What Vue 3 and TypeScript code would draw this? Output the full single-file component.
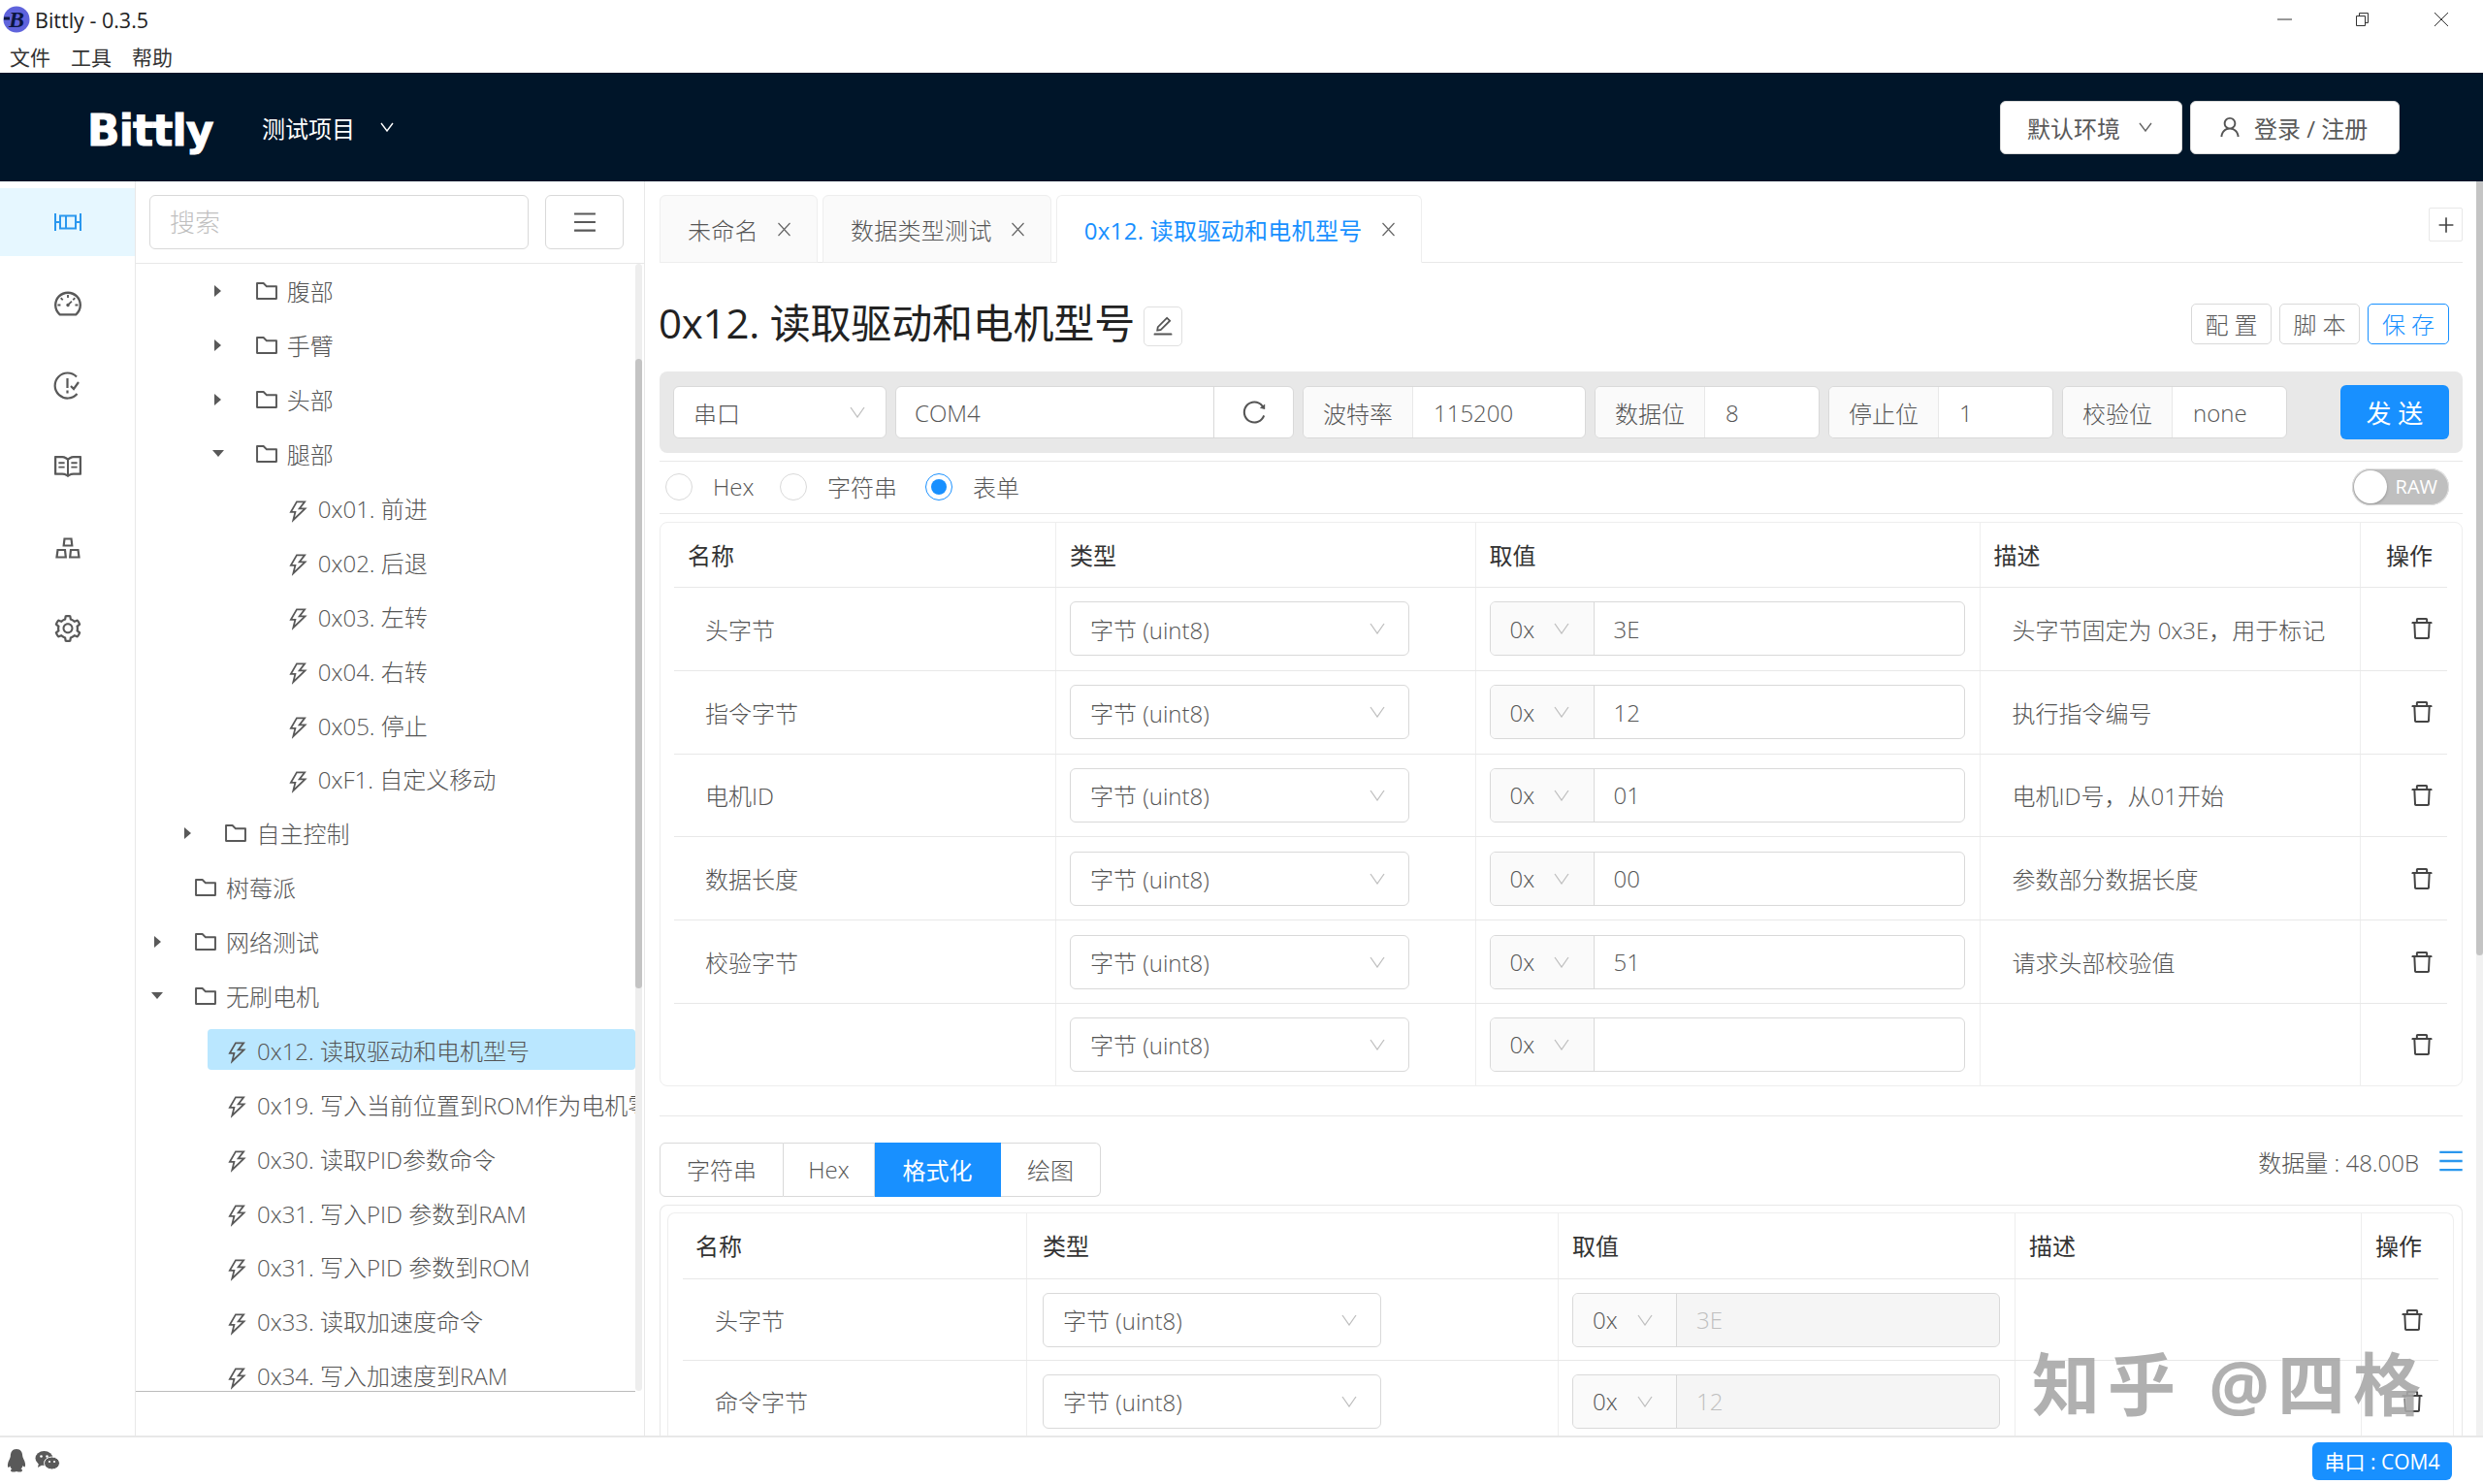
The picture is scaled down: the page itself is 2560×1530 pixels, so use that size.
<script setup lang="ts">
const ICONS: Record<string, string> = {
  delete: 'M360 184h-8c4.4 0 8-3.6 8-8v8h304v-8c0 4.4 3.6 8 8 8h-8v72h72v-80c0-35.3-28.7-64-64-64H352c-35.3 0-64 28.7-64 64v80h72v-72zm504 72H160c-17.7 0-32 14.3-32 32v32c0 4.4 3.6 8 8 8h60.4l24.7 523c1.6 34.1 29.8 61 63.9 61h454c34.2 0 62.3-26.8 63.9-61l24.7-523H888c4.4 0 8-3.6 8-8v-32c0-17.7-14.3-32-32-32zM731.3 840H292.7l-24.2-512h487l-24.2 512z',
  folder: 'M880 298.4H521L403.7 186.2a8.15 8.15 0 0 0-5.5-2.2H144c-17.7 0-32 14.3-32 32v592c0 17.7 14.3 32 32 32h736c17.7 0 32-14.3 32-32V330.4c0-17.7-14.3-32-32-32zM840 768H184V256h188.5l119.6 114.4H840V768z',
  bolt: 'M848 359.3H627.7L825.8 109c4.1-5.3.4-13-6.3-13H436c-2.8 0-5.5 1.5-6.9 4L170 547.5c-3.1 5.3.7 12 6.9 12h174.4l-89.4 357.6c-1.9 7.8 7.5 13.3 13.3 7.7L853.5 373c5.2-4.9 1.7-13.7-5.5-13.7zM378.2 732.5l60.3-241H281.1l189.6-327.4h224.6L487 427.4h211L378.2 732.5z',
  reload: 'M909.1 209.3l-56.4 44.1C775.8 155.1 656.2 92 521.9 92 290 92 102.3 279.5 102 511.5 101.7 743.7 289.8 932 521.9 932c181.3 0 335.8-115 394.6-276.1 1.5-4.2-.7-8.9-4.9-10.3l-56.7-19.5a8 8 0 0 0-10.1 4.8c-1.8 5-3.8 10-5.9 14.9-17.3 41-42.1 77.8-73.7 109.4A344.77 344.77 0 0 1 655.9 829c-42.3 17.9-87.4 27-133.8 27-46.5 0-91.5-9.1-133.8-27A341.5 341.5 0 0 1 279 755.2a342.16 342.16 0 0 1-73.7-109.4c-17.9-42.4-27-87.4-27-133.9s9.1-91.5 27-133.9c17.3-41 42.1-77.8 73.7-109.4 31.6-31.6 68.4-56.4 109.3-73.8 42.3-17.9 87.4-27 133.8-27 46.5 0 91.5 9.1 133.8 27a341.5 341.5 0 0 1 109.3 73.8c9.9 9.9 19.2 20.4 27.8 31.4l-60.2 47a8 8 0 0 0 3 14.1l175.6 43c5 1.2 9.9-2.6 9.9-7.7l.8-180.9c-.1-6.6-7.8-10.3-13-6.2z',
  edit: 'M257.7 752c2 0 4-.2 6-.5L431.9 722c2-.4 3.9-1.3 5.3-2.8l423.9-423.9a9.96 9.96 0 0 0 0-14.1L694.9 114.9c-1.9-1.9-4.4-2.9-7.1-2.9s-5.2 1-7.1 2.9L256.8 538.8c-1.5 1.5-2.4 3.3-2.8 5.3l-29.5 168.2a33.5 33.5 0 0 0 9.4 29.8c6.6 6.4 14.9 9.9 23.8 9.9zm67.4-174.4L687.8 215l73.3 73.3-362.7 362.6-88.9 15.7 15.6-89zM880 836H144c-17.7 0-32 14.3-32 32v36c0 4.4 3.6 8 8 8h784c4.4 0 8-3.6 8-8v-36c0-17.7-14.3-32-32-32z',
  setting: 'M924.8 625.7l-65.5-56c3.1-19 4.7-38.4 4.7-57.8s-1.6-38.8-4.7-57.8l65.5-56a32.03 32.03 0 0 0 9.3-35.2l-.9-2.6a443.74 443.74 0 0 0-79.7-137.9l-1.8-2.1a32.12 32.12 0 0 0-35.1-9.5l-81.3 28.9c-30-24.6-63.5-44-99.7-57.6l-15.7-85a32.05 32.05 0 0 0-25.8-25.7l-2.7-.5c-52.1-9.4-106.9-9.4-159 0l-2.7.5a32.05 32.05 0 0 0-25.8 25.7l-15.8 85.4a351.86 351.86 0 0 0-99 57.4l-81.9-29.1a32 32 0 0 0-35.1 9.5l-1.8 2.1a446.02 446.02 0 0 0-79.7 137.9l-.9 2.6c-4.5 12.5-.8 26.5 9.3 35.2l66.3 56.6c-3.1 18.8-4.6 38-4.6 57.1 0 19.2 1.5 38.4 4.6 57.1L99 625.5a32.03 32.03 0 0 0-9.3 35.2l.9 2.6c18.1 50.4 44.9 96.9 79.7 137.9l1.8 2.1a32.12 32.12 0 0 0 35.1 9.5l81.9-29.1c29.8 24.5 63.1 43.9 99 57.4l15.8 85.4a32.05 32.05 0 0 0 25.8 25.7l2.7.5a449.4 449.4 0 0 0 159 0l2.7-.5a32.05 32.05 0 0 0 25.8-25.7l15.7-85a350 350 0 0 0 99.7-57.6l81.3 28.9a32 32 0 0 0 35.1-9.5l1.8-2.1c34.8-41.1 61.6-87.5 79.7-137.9l.9-2.6c4.5-12.3.8-26.3-9.3-35zM788.3 465.9c2.5 15.1 3.8 30.6 3.8 46.1s-1.3 31-3.8 46.1l-6.6 40.1 74.7 63.9a370.03 370.03 0 0 1-42.6 73.6L721 702.8l-31.4 25.8c-23.9 19.6-50.5 35-79.3 45.8l-38.1 14.3-17.9 97a377.5 377.5 0 0 1-85 0l-17.9-97.2-37.8-14.5c-28.5-10.8-55-26.2-78.7-45.7l-31.4-25.9-93.4 33.2c-17-22.9-31.2-47.6-42.6-73.6l75.5-64.5-6.5-40c-2.4-14.9-3.7-30.3-3.7-45.5 0-15.3 1.2-30.6 3.7-45.5l6.5-40-75.5-64.5c11.3-26.1 25.6-50.7 42.6-73.6l93.4 33.2 31.4-25.9c23.7-19.5 50.2-34.9 78.7-45.7l37.9-14.3 17.9-97.2c28.1-3.2 56.8-3.2 85 0l17.9 97 38.1 14.3c28.7 10.8 55.4 26.2 79.3 45.8l31.4 25.8 92.8-32.9c17 22.9 31.2 47.6 42.6 73.6L781.8 426l6.5 39.9zM512 326c-97.2 0-176 78.8-176 176s78.8 176 176 176 176-78.8 176-176-78.8-176-176-176zm79.2 255.2A111.6 111.6 0 0 1 512 614c-29.9 0-58-11.7-79.2-32.8A111.6 111.6 0 0 1 400 502c0-29.9 11.7-58 32.8-79.2C454 401.6 482.1 390 512 390c29.9 0 58 11.6 79.2 32.8A111.6 111.6 0 0 1 624 502c0 29.9-11.7 58-32.8 79.2z',
  user: 'M858.5 763.6a374 374 0 0 0-80.6-119.5 375.63 375.63 0 0 0-119.5-80.6c-.4-.2-.8-.3-1.2-.5C719.5 518 760 444.7 760 362c0-137-111-248-248-248S264 225 264 362c0 82.7 40.5 156 102.8 201.1-.4.2-.8.3-1.2.5-44.8 18.9-85 46-119.5 80.6a375.63 375.63 0 0 0-80.6 119.5A371.7 371.7 0 0 0 136 901.8a8 8 0 0 0 8 8.2h60c4.4 0 7.9-3.5 8-7.8 2-77.2 33-149.5 87.8-204.3 56.7-56.7 132-87.9 212.2-87.9s155.5 31.2 212.2 87.9C779 752.7 810 825 812 902.2c.1 4.4 3.6 7.8 8 7.8h60a8 8 0 0 0 8-8.2c-1-47.8-10.9-94.3-29.5-138.2zM512 534c-45.9 0-89.1-17.9-121.6-50.4S340 407.9 340 362c0-45.9 17.9-89.1 50.4-121.6S466.1 190 512 190s89.1 17.9 121.6 50.4S684 316.1 684 362c0 45.9-17.9 89.1-50.4 121.6S557.9 534 512 534z',
  plus: 'M482 152h60q8 0 8 8v704q0 8-8 8h-60q-8 0-8-8V160q0-8 8-8zM176 474h672q8 0 8 8v60q0 8-8 8H176q-8 0-8-8v-60q0-8 8-8z',
  menu: 'M904 160H120c-4.4 0-8 3.6-8 8v64c0 4.4 3.6 8 8 8h784c4.4 0 8-3.6 8-8v-64c0-4.4-3.6-8-8-8zm0 624H120c-4.4 0-8 3.6-8 8v64c0 4.4 3.6 8 8 8h784c4.4 0 8-3.6 8-8v-64c0-4.4-3.6-8-8-8zm0-312H120c-4.4 0-8 3.6-8 8v64c0 4.4 3.6 8 8 8h784c4.4 0 8-3.6 8-8v-64c0-4.4-3.6-8-8-8z',
  dashboard: 'M924.8 385.6a446.7 446.7 0 0 0-96-142.4 446.7 446.7 0 0 0-142.4-96C631.1 123.8 572.5 112 512 112s-119.1 11.8-174.4 35.2a446.7 446.7 0 0 0-142.4 96 446.7 446.7 0 0 0-96 142.4C75.8 440.9 64 499.5 64 560c0 132.7 58.3 257.7 159.9 343.1l1.7 1.4c5.8 4.8 13.1 7.5 20.6 7.5h531.7c7.5 0 14.8-2.7 20.6-7.5l1.7-1.4C901.7 817.7 960 692.7 960 560c0-60.5-11.9-119.1-35.2-174.4zM761.4 836H262.6A371.12 371.12 0 0 1 140 560c0-99.4 38.7-192.8 109-263 70.3-70.3 163.7-109 263-109 99.4 0 192.8 38.7 263 109 70.3 70.3 109 163.7 109 263 0 105.6-44.5 205.5-122.6 276zM623.5 421.5a8.03 8.03 0 0 0-11.3 0L527.7 506c-18.7-5-39.4-.2-54.1 14.5a55.95 55.95 0 0 0 0 79.2 55.95 55.95 0 0 0 79.2 0 55.87 55.87 0 0 0 14.5-54.1l84.5-84.5c3.1-3.1 3.1-8.2 0-11.3l-28.3-28.3zM490 320h44c4.4 0 8-3.6 8-8v-80c0-4.4-3.6-8-8-8h-44c-4.4 0-8 3.6-8 8v80c0 4.4 3.6 8 8 8zm260 218v44c0 4.4 3.6 8 8 8h80c4.4 0 8-3.6 8-8v-44c0-4.4-3.6-8-8-8h-80c-4.4 0-8 3.6-8 8zm12.7-197.2l-31.1-31.1a8.03 8.03 0 0 0-11.3 0l-56.6 56.6a8.03 8.03 0 0 0 0 11.3l31.1 31.1c3.1 3.1 8.2 3.1 11.3 0l56.6-56.6c3.1-3.1 3.1-8.2 0-11.3zm-458.6-31.1a8.03 8.03 0 0 0-11.3 0l-31.1 31.1a8.03 8.03 0 0 0 0 11.3l56.6 56.6c3.1 3.1 8.2 3.1 11.3 0l31.1-31.1c3.1-3.1 3.1-8.2 0-11.3l-56.6-56.6zM262 530h-80c-4.4 0-8 3.6-8 8v44c0 4.4 3.6 8 8 8h80c4.4 0 8-3.6 8-8v-44c0-4.4-3.6-8-8-8z',
  book: 'M928 161H699.2c-49.1 0-97.1 14.1-138.4 40.7L512 233l-48.8-31.3A255.2 255.2 0 0 0 324.8 161H96c-17.7 0-32 14.3-32 32v568c0 17.7 14.3 32 32 32h228.8c49.1 0 97.1 14.1 138.4 40.7l44.4 28.6c1.3.8 2.8 1.3 4.3 1.3s3-.4 4.3-1.3l44.4-28.6C602 807.1 650.1 793 699.2 793H928c17.7 0 32-14.3 32-32V193c0-17.7-14.3-32-32-32zM324.8 721H136V233h188.8c35.4 0 69.8 10.1 99.5 29.2l48.8 31.3 6.9 4.5v462c-47.6-25.6-100.8-39-155.2-39zm563.2 0H699.2c-54.4 0-107.6 13.4-155.2 39V298l6.9-4.5 48.8-31.3c29.7-19.1 64.1-29.2 99.5-29.2H888v488zM396.9 361H211.1c-3.9 0-7.1 3.4-7.1 7.5v45c0 4.1 3.2 7.5 7.1 7.5h185.7c3.9 0 7.1-3.4 7.1-7.5v-45c.1-4.1-3.1-7.5-7-7.5zm223.1 7.5v45c0 4.1 3.2 7.5 7.1 7.5h185.7c3.9 0 7.1-3.4 7.1-7.5v-45c0-4.1-3.2-7.5-7.1-7.5H627.1c-3.9 0-7.1 3.4-7.1 7.5zM396.9 501H211.1c-3.9 0-7.1 3.4-7.1 7.5v45c0 4.1 3.2 7.5 7.1 7.5h185.7c3.9 0 7.1-3.4 7.1-7.5v-45c.1-4.1-3.1-7.5-7-7.5zm416 0H627.1c-3.9 0-7.1 3.4-7.1 7.5v45c0 4.1 3.2 7.5 7.1 7.5h185.7c3.9 0 7.1-3.4 7.1-7.5v-45c.1-4.1-3.1-7.5-7-7.5z',
}

interface TreeRow { label: string; level: number; leaf?: boolean; arrow?: 'right' | 'down'; selected?: boolean }
const treeRows: TreeRow[] = [
  { label: '腹部', level: 3, arrow: 'right' },
  { label: '手臂', level: 3, arrow: 'right' },
  { label: '头部', level: 3, arrow: 'right' },
  { label: '腿部', level: 3, arrow: 'down' },
  { label: '0x01. 前进', level: 4, leaf: true },
  { label: '0x02. 后退', level: 4, leaf: true },
  { label: '0x03. 左转', level: 4, leaf: true },
  { label: '0x04. 右转', level: 4, leaf: true },
  { label: '0x05. 停止', level: 4, leaf: true },
  { label: '0xF1. 自定义移动', level: 4, leaf: true },
  { label: '自主控制', level: 2, arrow: 'right' },
  { label: '树莓派', level: 1 },
  { label: '网络测试', level: 1, arrow: 'right' },
  { label: '无刷电机', level: 1, arrow: 'down' },
  { label: '0x12. 读取驱动和电机型号', level: 2, leaf: true, selected: true },
  { label: '0x19. 写入当前位置到ROM作为电机零点命令', level: 2, leaf: true },
  { label: '0x30. 读取PID参数命令', level: 2, leaf: true },
  { label: '0x31. 写入PID 参数到RAM', level: 2, leaf: true },
  { label: '0x31. 写入PID 参数到ROM', level: 2, leaf: true },
  { label: '0x33. 读取加速度命令', level: 2, leaf: true },
  { label: '0x34. 写入加速度到RAM', level: 2, leaf: true },
]

const tabs = [
  { label: '未命名' },
  { label: '数据类型测试' },
  { label: '0x12. 读取驱动和电机型号', active: true },
]

const groups = [
  { label: '波特率', value: '115200', cls: 'g-baud' },
  { label: '数据位', value: '8', cls: 'g-other' },
  { label: '停止位', value: '1', cls: 'g-other' },
  { label: '校验位', value: 'none', cls: 'g-other' },
]

const radios = [
  { label: 'Hex', w: 'r-hex' },
  { label: '字符串', w: 'r-str' },
  { label: '表单', w: 'r-form', on: true },
]

const headers = ['名称', '类型', '取值', '描述', '操作']
const reqRows = [
  { name: '头字节', value: '3E', desc: '头字节固定为 0x3E，用于标记' },
  { name: '指令字节', value: '12', desc: '执行指令编号' },
  { name: '电机ID', value: '01', desc: '电机ID号，从01开始' },
  { name: '数据长度', value: '00', desc: '参数部分数据长度' },
  { name: '校验字节', value: '51', desc: '请求头部校验值' },
  { name: '', value: '', desc: '' },
]
const resRows = [
  { name: '头字节', value: '3E' },
  { name: '命令字节', value: '12' },
]
const viewTabs = [
  { label: '字符串', cls: 'v-str' },
  { label: 'Hex', cls: 'v-hex' },
  { label: '格式化', cls: 'v-fmt', on: true },
  { label: '绘图', cls: 'v-plot' },
]

function rowIndent(r: TreeRow): number {
  return r.leaf ? 74 + (r.level - 2) * 31.4 : 2 + (r.level - 1) * 31.4
}
</script>

<template>
  <div class="app">
    <div class="titlebar">
      <div class="tb-row">
        <svg class="logo" viewBox="0 0 28 28">
          <circle cx="14" cy="14" r="13.500" fill="#5f63dc" />
          <path d="M1 11.500h6v3H1z" fill="#0b1640" />
          <text x="14" y="22" text-anchor="middle" class="logo-b">B</text>
        </svg>
        <span class="tb-title">Bittly - 0.3.5</span>
        <div class="win-ctl">
          <span class="win-btn"><svg width="16" height="16" viewBox="0 0 16 16"><path d="M0 8h15" stroke="#333" fill="none" /></svg></span>
          <span class="win-btn"><svg width="16" height="16" viewBox="0 0 16 16"><path d="M1.500 4.500h9v10h-9zM4.500 4.500v-3h9v10h-3" stroke="#333" fill="none" /></svg></span>
          <span class="win-btn"><svg width="16" height="16" viewBox="0 0 16 16"><path d="M1 1l14 14M15 1L1 15" stroke="#333" fill="none" /></svg></span>
        </div>
      </div>
      <div class="tb-menu"><span>文件</span><span>工具</span><span>帮助</span></div>
    </div>

    <header class="topbar">
      <span class="brand">Bittly</span>
      <span class="project">测试项目</span>
      <svg class="project-chev" width="14" height="10" viewBox="0 0 14 10"><path d="M1 1l6 8 6-8" stroke="#fff" fill="none" stroke-width="1.4" /></svg>
      <div class="top-right">
        <button class="top-btn env">默认环境<svg width="14" height="10" viewBox="0 0 14 10"><path d="M1 1l6 8 6-8" stroke="#666" fill="none" stroke-width="1.4" /></svg></button>
        <button class="top-btn login"><svg width="26" height="26" viewBox="0 0 1024 1024"><path :d="ICONS.user" fill="#555" /></svg>登录 / 注册</button>
      </div>
    </header>

    <div class="body">
      <nav class="rail">
        <div class="rail-item active">
          <svg width="28" height="18" viewBox="0 0 28 18" fill="none" stroke="#2a97ee" stroke-width="2">
            <path d="M1 0v18M27 0v18M1 9h5M22 9h5" />
            <rect x="6" y="2.500" width="16" height="13" />
            <path d="M12 2.500v13" />
          </svg>
        </div>
        <div class="rail-item"><svg width="32" height="32" viewBox="0 0 1024 1024"><path :d="ICONS.dashboard" fill="#595959" /></svg></div>
        <div class="rail-item">
          <svg width="30" height="30" viewBox="0 0 30 30" fill="none" stroke="#595959" stroke-width="2.200">
            <path d="M24 6.500A13 13 0 1 0 24.500 24" />
            <path d="M14.500 8v10M14.500 20.500v3" />
            <path d="M18 16l3 3 5-7" />
          </svg>
        </div>
        <div class="rail-item"><svg width="32" height="32" viewBox="0 0 1024 1024"><path :d="ICONS.book" fill="#595959" /></svg></div>
        <div class="rail-item">
          <svg width="26" height="22" viewBox="0 0 26 22" fill="none" stroke="#595959" stroke-width="2.200">
            <path d="M9.500 1.500h7l.8 7h-8.600z" />
            <path d="M2.500 13h7.500l.8 7.500H1.500zM16 13h7.500l1 7.500H15.200z" />
          </svg>
        </div>
        <div class="rail-item"><svg width="32" height="32" viewBox="0 0 1024 1024"><path :d="ICONS.setting" fill="#595959" /></svg></div>
      </nav>

      <aside class="tree-panel">
        <div class="tree-tools">
          <div class="search">搜索</div>
          <button class="tool-btn"><svg width="28" height="28" viewBox="0 0 1024 1024"><path :d="ICONS.menu" fill="#595959" /></svg></button>
        </div>
        <div class="tree-wrap">
          <div class="tree-list">
            <div v-for="r in treeRows" :key="r.label" class="tree-row" :style="{ paddingLeft: rowIndent(r) + 'px' }">
              <div v-if="r.leaf" class="leaf" :class="{ selected: r.selected }">
                <svg class="bolt" width="27" height="27" viewBox="0 0 1024 1024"><path :d="ICONS.bolt" fill="#595959" /></svg>
                <span class="leaf-text">{{ r.label }}</span>
              </div>
              <template v-else>
                <span class="arrow-slot">
                  <span v-if="r.arrow" :class="r.arrow === 'right' ? 'arrow-r' : 'arrow-d'"></span>
                </span>
                <svg class="folder" width="28" height="28" viewBox="0 0 1024 1024"><path :d="ICONS.folder" fill="#595959" /></svg>
                <span class="folder-text">{{ r.label }}</span>
              </template>
            </div>
          </div>
          <div class="tree-scroll"><div class="tree-thumb"></div></div>
        </div>
      </aside>

      <main class="main">
        <div class="content">
          <div class="tabbar">
            <div v-for="t in tabs" :key="t.label" class="tab" :class="{ active: t.active }">
              <span>{{ t.label }}</span>
              <svg width="15" height="15" viewBox="0 0 15 15"><path d="M1.500 1l12 13M13.500 1l-12 13" stroke="#666" fill="none" stroke-width="1.200" /></svg>
            </div>
            <button class="tab-add"><svg width="22" height="22" viewBox="0 0 1024 1024"><path :d="ICONS.plus" fill="#444" /></svg></button>
          </div>

          <div class="titlerow">
            <h1 class="title">0x12. 读取驱动和电机型号</h1>
            <button class="edit-btn"><svg width="24" height="24" viewBox="0 0 1024 1024"><path :d="ICONS.edit" fill="#555" /></svg></button>
            <div class="title-actions">
              <button class="act-btn">配 置</button>
              <button class="act-btn">脚 本</button>
              <button class="act-btn save">保 存</button>
            </div>
          </div>

          <div class="reqbar">
            <div class="ctl sel-port"><span>串口</span><svg class="chev" width="16" height="12" viewBox="0 0 16 12"><path d="M1 1l7 10 7-10" /></svg></div>
            <div class="ctl port"><span class="port-val">COM4</span><span class="port-btn"><svg width="28" height="28" viewBox="0 0 1024 1024"><path :d="ICONS.reload" fill="#555" /></svg></span></div>
            <div v-for="g in groups" :key="g.label" class="ctl grp" :class="g.cls">
              <span class="grp-label">{{ g.label }}</span><span class="grp-val">{{ g.value }}</span>
            </div>
            <button class="send">发 送</button>
          </div>

          <div class="radiorow">
            <label v-for="r in radios" :key="r.label" class="radio" :class="r.w">
              <span class="radio-dot" :class="{ on: r.on }"></span><span>{{ r.label }}</span>
            </label>
            <div class="toggle"><span class="knob"></span><span class="toggle-text">RAW</span></div>
          </div>

          <div class="ftable req">
            <div class="frow head">
              <div v-for="h in headers" :key="h" class="fcell">{{ h }}</div>
            </div>
            <div v-for="(r, i) in reqRows" :key="i" class="frow">
              <div class="fcell c-name">{{ r.name }}</div>
              <div class="fcell"><div class="ctl type-sel"><span>字节 (uint8)</span><svg class="chev" width="16" height="12" viewBox="0 0 16 12"><path d="M1 1l7 10 7-10" /></svg></div></div>
              <div class="fcell"><div class="ctl value"><span class="prefix">0x<svg class="chev" width="16" height="12" viewBox="0 0 16 12"><path d="M1 1l7 10 7-10" /></svg></span><span class="val-text">{{ r.value }}</span></div></div>
              <div class="fcell c-desc">{{ r.desc }}</div>
              <div class="fcell c-op"><svg width="28" height="28" viewBox="0 0 1024 1024"><path :d="ICONS.delete" fill="#444" /></svg></div>
            </div>
          </div>

          <div class="sep"></div>

          <div class="viewbar">
            <div class="viewtabs">
              <span v-for="v in viewTabs" :key="v.label" class="vtab" :class="[v.cls, { on: v.on }]">{{ v.label }}</span>
            </div>
            <span class="datasize">数据量 : 48.00B</span>
            <svg class="dataicon" width="30" height="30" viewBox="0 0 1024 1024"><path :d="ICONS.menu" fill="#2a97ee" /></svg>
          </div>

          <div class="res-outer">
            <div class="ftable res">
              <div class="frow head">
                <div v-for="h in headers" :key="h" class="fcell">{{ h }}</div>
              </div>
              <div v-for="(r, i) in resRows" :key="i" class="frow">
                <div class="fcell c-name">{{ r.name }}</div>
                <div class="fcell"><div class="ctl type-sel"><span>字节 (uint8)</span><svg class="chev" width="16" height="12" viewBox="0 0 16 12"><path d="M1 1l7 10 7-10" /></svg></div></div>
                <div class="fcell"><div class="ctl value disabled"><span class="prefix">0x<svg class="chev" width="16" height="12" viewBox="0 0 16 12"><path d="M1 1l7 10 7-10" /></svg></span><span class="val-text">{{ r.value }}</span></div></div>
                <div class="fcell"></div>
                <div class="fcell c-op"><svg width="28" height="28" viewBox="0 0 1024 1024"><path :d="ICONS.delete" fill="#444" /></svg></div>
              </div>
            </div>
          </div>
        </div>
        <div class="main-scroll"><div class="main-thumb"></div></div>
        <div class="watermark">知乎 @四格</div>
      </main>
    </div>

    <footer class="statusbar">
      <svg width="20" height="24" viewBox="0 0 20 24" fill="#595959"><path d="M10 0C5.500 0 3.800 3.500 3.800 7.500c0 2-2.300 4.500-2.800 8-.3 2 .2 3.500.8 3.500s1-.8 1.500-1.500c.5 1.500 1.200 2.500 2.200 3.300C4 21 3.500 22 4.500 23c1.500 1 3.500.5 5.500 0 2 .5 4 1 5.500 0 1-1 .5-2-1-2.700 1-.8 1.700-1.800 2.200-3.300.5.700.9 1.500 1.500 1.500s1.100-1.500.8-3.500c-.5-3.500-2.800-6-2.800-8C16.200 3.500 14.500 0 10 0z" /></svg>
      <svg class="wechat" width="26" height="20" viewBox="0 0 26 20"><ellipse cx="9.500" cy="7.500" rx="9" ry="7.500" fill="#595959" /><path d="M4 12l-1 5 5-3z" fill="#595959" /><ellipse cx="17.500" cy="12.500" rx="8" ry="6.500" fill="#595959" stroke="#fff" /><circle cx="6.500" cy="5.500" r="1.300" fill="#fff" /><circle cx="12.500" cy="5.500" r="1.300" fill="#fff" /><circle cx="15" cy="11" r="1.100" fill="#fff" /><circle cx="20" cy="11" r="1.100" fill="#fff" /></svg>
      <span class="port-badge">串口 : COM4</span>
    </footer>
  </div>
</template>

<style>
html, body { margin: 0; padding: 0; background: #fff; }
</style>

<style scoped>
.app {
  width: 2560px; height: 1530px; overflow: hidden; display: flex; flex-direction: column;
  background: #fff; color: #555; font-size: 24px; font-weight: 300;
  font-family: "Open Sans", "Noto Sans CJK SC", sans-serif;
}
button { font: inherit; color: inherit; background: #fff; cursor: pointer; padding: 0; }
svg { flex: none; display: block; }

.titlebar { height: 75px; flex: none; display: flex; flex-direction: column; font-weight: 400; }
.tb-row { height: 40px; display: flex; align-items: center; padding-left: 3px; }
.logo { width: 28px; height: 28px; }
.logo-b { font: italic 700 24px "Liberation Serif", serif; fill: #0b1640; }
.tb-title { margin-left: 5px; font-size: 21.500px; color: #222; }
.win-ctl { margin-left: auto; display: flex; margin-right: 3px; }
.win-btn { width: 80.500px; height: 40px; display: flex; align-items: center; justify-content: center; }
.tb-menu { height: 35px; display: flex; align-items: center; gap: 21px; padding-left: 10px; font-size: 21px; color: #333; }

.topbar { height: 112px; flex: none; background: #001529; display: flex; align-items: center; padding: 0 86px 0 90px; font-weight: 400; }
.brand { font: bold 44px "DejaVu Sans", sans-serif; color: #fff; letter-spacing: -.8px; width: 180px; margin-top: 6px; -webkit-text-stroke: 1px #fff; }
.project { color: #fff; font-size: 24px; }
.project-chev { margin-left: 26px; }
.top-right { margin-left: auto; display: flex; gap: 8px; }
.top-btn { height: 55px; border: 1px solid #d9d9d9; border-radius: 6px; background: #fff; display: flex; align-items: center; color: #595959; font-size: 24px; }
.env { width: 188px; padding-left: 27px; gap: 19px; }
.login { width: 216px; padding-left: 27px; gap: 12px; }

.body { flex: 1; min-height: 0; display: flex; position: relative; }

.rail { width: 140px; flex: none; box-sizing: border-box; border-right: 1px solid #e8e8e8; padding-top: 7px; }
.rail-item { height: 70px; margin-bottom: 13.900px; display: flex; align-items: center; justify-content: center; }
.rail-item.active { background: #e6f7ff; }

.tree-panel { width: 525px; flex: none; box-sizing: border-box; border-right: 1px solid #e8e8e8; display: flex; flex-direction: column; }
.tree-tools { height: 85px; flex: none; box-sizing: border-box; padding: 14px 21px 0 14px; display: flex; gap: 17px; border-bottom: 1px solid #e8e8e8; }
.search { flex: 1; height: 56px; box-sizing: border-box; border: 1px solid #d9d9d9; border-radius: 6px; padding-left: 20px; line-height: 54px; color: #bfbfbf; font-size: 26px; }
.tool-btn { width: 81px; height: 56px; box-sizing: border-box; border: 1px solid #d9d9d9; border-radius: 6px; display: flex; align-items: center; justify-content: center; }
.tree-wrap { flex: none; display: flex; height: 1163px; }
.tree-list { width: 515px; flex: none; height: 1163px; box-sizing: border-box; border-bottom: 1px solid #bbb; overflow: hidden; }
.tree-row { height: 55.900px; display: flex; align-items: center; box-sizing: border-box; white-space: nowrap; }
.arrow-slot { width: 40px; flex: none; display: flex; justify-content: center; }
.arrow-r { width: 0; height: 0; border-left: 7px solid #595959; border-top: 6px solid transparent; border-bottom: 6px solid transparent; }
.arrow-d { width: 0; height: 0; border-top: 7px solid #595959; border-left: 6px solid transparent; border-right: 6px solid transparent; }
.folder { margin-left: 16px; }
.folder-text { margin-left: 7px; }
.leaf { flex: 1; min-width: 0; height: 42px; box-sizing: border-box; padding-left: 17px; display: flex; align-items: center; border-radius: 4px; overflow: hidden; }
.leaf.selected { background: #bae7ff; }
.bolt { margin-right: 7px; margin-top: 7px; }
.tree-scroll { width: 7px; height: 1162px; background: #eee; border-radius: 4px; }
.tree-thumb { margin-top: 98px; height: 649px; background: #c4c4c4; border-radius: 4px; }

.main { flex: 1; min-width: 0; display: flex; overflow: hidden; }
.content { flex: 1; min-width: 0; box-sizing: border-box; padding: 14px 14px 0 15px; overflow: hidden; }
.main-scroll { width: 7px; flex: none; background: #f1f1f1; }
.main-thumb { height: 798px; background: #c4c4c4; border-radius: 0 0 4px 4px; }

.tabbar { height: 70px; box-sizing: border-box; display: flex; gap: 5px; border-bottom: 1px solid #e8e8e8; }
.tab { height: 70px; box-sizing: border-box; background: #fafafa; border: 1px solid #eee; border-radius: 6px 6px 0 0; padding: 0 26px 0 28px; display: flex; align-items: center; gap: 19px; letter-spacing: .3px; }
.tab.active { background: #fff; color: #1890ff; border-bottom-color: #fff; font-weight: 400; }
.tab-add { margin-left: auto; margin-top: 13px; width: 35px; height: 35px; box-sizing: border-box; border: 1px solid #e8e8e8; border-radius: 2px; display: flex; align-items: center; justify-content: center; }

.titlerow { height: 112px; box-sizing: border-box; display: flex; align-items: center; padding: 14px 14px 0 0; }
.title { margin: -3px 0 0 -1px; font-size: 42px; font-weight: 400; color: #222; line-height: 56px; letter-spacing: -.2px; }
.edit-btn { width: 40px; height: 41px; margin-left: 9px; margin-top: 4px; box-sizing: border-box; border: 1px solid #e0e0e0; border-radius: 5px; display: flex; align-items: center; justify-content: center; }
.title-actions { margin-left: auto; display: flex; gap: 8px; }
.act-btn { width: 83px; height: 42px; box-sizing: border-box; border: 1px solid #d9d9d9; border-radius: 5px; font-size: 24px; color: #595959; line-height: 38px; padding-top: 2px; }
.act-btn.save { color: #1890ff; border-color: #1890ff; width: 84px; }

.reqbar { height: 84px; box-sizing: border-box; background: #e8e8e8; border-radius: 8px; display: flex; align-items: center; gap: 9px; padding: 0 14px; }
.ctl { height: 54px; box-sizing: border-box; background: #fff; border: 1px solid #d9d9d9; border-radius: 6px; display: flex; align-items: center; overflow: hidden; flex: none; }
.chev { fill: none; stroke: #bfbfbf; stroke-width: 1.300; }
.sel-port { width: 220px; padding: 0 21px 0 20px; justify-content: space-between; }
.port { width: 411px; }
.port-val { flex: 1; padding-left: 19px; }
.port-btn { width: 82px; height: 100%; border-left: 1px solid #d9d9d9; display: flex; align-items: center; justify-content: center; box-sizing: border-box; }
.grp-label { width: 113px; height: 100%; box-sizing: border-box; flex: none; display: flex; align-items: center; padding-left: 20px; background: #fafafa; border-right: 1px solid #e8e8e8; }
.grp-val { padding-left: 21px; }
.g-baud { width: 292px; }
.g-other { width: 232px; }
.send { margin-left: auto; width: 112px; height: 56px; border: 0; border-radius: 6px; background: #1890ff; color: #fff; font-size: 26px; font-weight: 400; }

.radiorow { height: 55px; margin-top: 8px; box-sizing: border-box; border-top: 1px solid #e8e8e8; border-bottom: 1px solid #e8e8e8; display: flex; align-items: center; padding: 0 14px 2px 6px; }
.radio { display: flex; align-items: center; gap: 21px; }
.r-hex { width: 118px; }
.r-str { width: 150px; }
.radio-dot { width: 28px; height: 28px; box-sizing: border-box; border: 1px solid #d9d9d9; border-radius: 50%; display: flex; align-items: center; justify-content: center; }
.radio-dot.on { border-color: #1890ff; }
.radio-dot.on::after { content: ""; width: 16px; height: 16px; border-radius: 50%; background: #1890ff; }
.toggle { margin-left: auto; width: 100px; height: 38px; box-sizing: border-box; border-radius: 19px; background: #bfbfbf; display: flex; align-items: center; justify-content: space-between; padding: 0 12px 0 2px; box-shadow: 0 0 0 1px #e4e4e4 inset; }
.knob { width: 34px; height: 34px; background: #fff; border-radius: 50%; box-shadow: 0 1px 3px rgba(0,0,0,.25); }
.toggle-text { color: #fff; font-size: 20px; font-weight: 400; }

.ftable { box-sizing: border-box; border: 1px solid #eee; border-radius: 8px; padding: 0 15px 0 14px; }
.frow { display: grid; box-sizing: border-box; border-bottom: 1px solid #e8e8e8; }
.frow:last-child { border-bottom: 0; }
.fcell { display: flex; align-items: center; border-right: 1px solid #eee; box-sizing: border-box; min-width: 0; }
.fcell:last-child { border-right: 0; }
.head .fcell { color: #333; font-weight: 400; padding-bottom: 2px; }
.type-sel { justify-content: space-between; }
.value .prefix { height: 100%; box-sizing: border-box; display: flex; align-items: center; background: #fafafa; border-right: 1px solid #d9d9d9; flex: none; }
.val-text { padding-left: 20px; }
.disabled { background: #f5f5f5; }
.disabled .val-text { color: #bfbfbf; }

.req { margin-top: 8px; height: 582px; }
.req .frow { height: 85.800px; grid-template-columns: 394px 432.500px 520px 392.500px 89px; }
.req .frow.head { height: 67px; }
.req .frow:last-child { height: 84px; }
.req .head .fcell { padding-left: 14px; }
.req .head .fcell:last-child { padding-left: 26px; }
.req .c-name { padding-left: 32px; }
.req .fcell:nth-child(2) { padding-left: 14px; }
.req .fcell:nth-child(3) { padding-left: 14px; }
.req .type-sel { width: 350px; height: 56px; padding: 0 24px 0 20px; }
.req .value { width: 490px; height: 56px; }
.req .c-desc { padding-left: 33px; }
.c-op { justify-content: flex-end; }
.req .c-op { padding-right: 12px; }

.sep { margin-top: 30px; border-top: 1px solid #e8e8e8; }
.viewbar { margin-top: 27px; height: 56px; display: flex; align-items: center; }
.viewtabs { display: flex; height: 56px; box-sizing: border-box; }
.vtab { height: 56px; box-sizing: border-box; display: flex; align-items: center; justify-content: center; border: 1px solid #d9d9d9; border-left: 0; padding-bottom: 2px; }
.vtab:first-child { border-left: 1px solid #d9d9d9; border-radius: 6px 0 0 6px; }
.vtab:last-child { border-radius: 0 6px 6px 0; }
.v-str { width: 128px; }
.v-hex { width: 94px; }
.v-fmt { width: 130px; }
.v-plot { width: 103px; }
.vtab.on { background: #1890ff; color: #fff; border-color: #1890ff; font-weight: 400; }
.datasize { margin-left: auto; margin-top: -18px; }
.dataicon { margin-left: 18px; margin-top: -18px; margin-right: -3px; }

.res-outer { margin-top: 8px; box-sizing: border-box; border: 1px solid #e8e8e8; border-bottom: 0; border-radius: 8px 8px 0 0; padding: 7px 8px 0 7px; }
.res { padding: 0 15px; border-bottom: 0; }
.res .frow { height: 84px; border-bottom: 1px solid #e8e8e8; grid-template-columns: 355px 548px 471px 357px 79px; }
.res .frow.head { height: 68px; }
.res .frow:last-child { height: 84px; }
.res .head .fcell { padding-left: 14px; }
.res .head .fcell:first-child { padding-left: 13px; }
.res .c-name { padding-left: 33px; }
.res .fcell:nth-child(2) { padding-left: 16px; }
.res .fcell:nth-child(3) { padding-left: 14px; }
.res .type-sel { width: 349px; height: 56px; padding: 0 24px 0 20px; }
.res .value { width: 441px; height: 56px; }
.res .c-op { padding-right: 13px; }
.prefix { gap: 20px; padding: 0 16px 0 20px; width: 107px; }

.watermark { position: absolute; left: 2095px; top: 1200px; font-size: 70px; font-weight: 700; color: rgba(150,150,150,.75); letter-spacing: 8px; white-space: nowrap; line-height: 80px; pointer-events: none; text-shadow: -1px 1px 0 rgba(255,255,255,.6); }

.statusbar { height: 50px; flex: none; box-sizing: border-box; border-top: 2px solid #e8e8e8; display: flex; align-items: center; padding: 0 32px 0 7px; gap: 9px; font-weight: 400; }
.wechat { margin-left: 0; }
.port-badge { margin-left: auto; width: 144px; height: 39px; box-sizing: border-box; background: #1890ff; color: #fff; border-radius: 6px; font-size: 21px; display: flex; align-items: center; justify-content: center; white-space: nowrap; }
</style>
